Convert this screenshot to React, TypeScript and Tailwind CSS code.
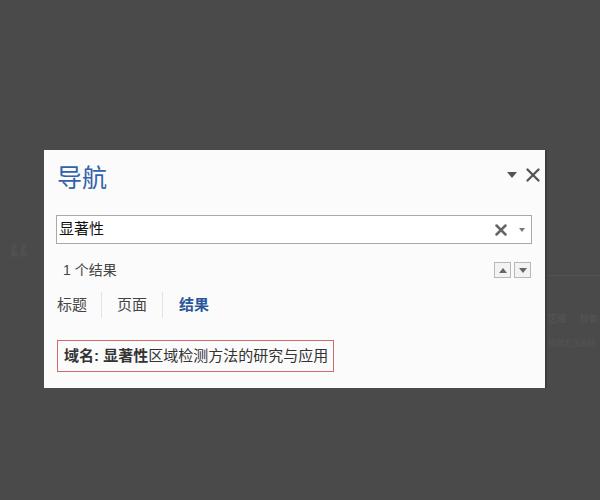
import { X } from 'lucide-react';

function Tri({ className = '' }: { className?: string }) {
  return (
    <svg width="10" height="6" viewBox="0 0 10 6" className={className}>
      <path d="M0 0 L10 0 L5 6 Z" fill="currentColor" />
    </svg>
  );
}

export default function App() {
  return (
    <div
      className="relative w-[600px] h-[500px] bg-[#4a4a4a] overflow-hidden"
      style={{ fontFamily: '"Liberation Sans", "Noto Sans CJK SC", sans-serif' }}
    >
      {/* dimmed document behind the pane */}
      <div className="absolute left-[8px] top-[238px] text-[44px] leading-none font-bold text-[#505050]">“</div>
      <div className="absolute left-[546px] top-[275px] w-[54px] border-t border-[#525252]" />
      <div className="absolute left-[548px] top-[313px] flex gap-[14px] text-[9px] text-[#575757]">
        <span>区域</span>
        <span>检索</span>
      </div>
      <div className="absolute left-[548px] top-[338px] text-[8px] text-[#565656] whitespace-nowrap">
        检测方法的研
      </div>

      {/* navigation pane */}
      <div className="relative ml-[44px] mt-[150px] w-[503px] bg-[#fbfbfb] border-r-2 border-[#3c3c3c] pl-[12px] pr-[13px] pb-[16px]">
        <div className="h-[56px] flex items-center justify-between">
          <span className="text-[25px] leading-none text-[#3262ac] pl-[1px]">导航</span>
          <div className="flex items-center gap-[5px] text-[#555] -mt-[7px] -mr-[12px]">
            <Tri />
            <X size={22} strokeWidth={2.6} />
          </div>
        </div>

        <div className="mt-[9px] h-[29px] flex items-center border border-[#a9a9a9] bg-white pl-[2px] pr-[6px]">
          <span className="flex-1 text-[15px] text-[#111]">显著性</span>
          <X size={18} strokeWidth={3.4} className="text-[#666] mr-[9px]" />
          <svg width="6" height="4" viewBox="0 0 6 4" className="text-[#777]">
            <path d="M0 0 L6 0 L3 4 Z" fill="currentColor" />
          </svg>
        </div>

        <div className="mt-[14px] h-[24px] flex items-center justify-between">
          <span className="pl-[7px] text-[14px] text-[#444]">1 个结果</span>
          <div className="flex gap-[3px] pr-[1px]">
            <div className="w-[17px] h-[16px] flex items-center justify-center border border-[#b8b8b8] bg-[#f3f3f3]">
              <svg width="8" height="5" viewBox="0 0 8 5" className="text-[#666]">
                <path d="M0 5 L8 5 L4 0 Z" fill="currentColor" />
              </svg>
            </div>
            <div className="w-[17px] h-[16px] flex items-center justify-center border border-[#b8b8b8] bg-[#f3f3f3]">
              <svg width="8" height="5" viewBox="0 0 8 5" className="text-[#666]">
                <path d="M0 0 L8 0 L4 5 Z" fill="currentColor" />
              </svg>
            </div>
          </div>
        </div>

        <div className="mt-[10px] h-[26px] flex items-center text-[15px] text-[#444]">
          <span className="pl-[1px] pr-[14px] h-full flex items-center border-r border-[#e2e2e2]">标题</span>
          <span className="pl-[15px] pr-[15px] h-full flex items-center border-r border-[#e2e2e2]">页面</span>
          <span className="pl-[16px] h-full flex items-center font-bold text-[#2b579a]">结果</span>
        </div>

        <div className="mt-[22px] ml-[1px] w-[277px] h-[32px] flex items-center border border-[#d4686b] pl-[6px] text-[15px] text-[#333] whitespace-nowrap">
          <span className="font-bold">域名: 显著性</span>
          <span>区域检测方法的研究与应用</span>
        </div>
      </div>
    </div>
  );
}
